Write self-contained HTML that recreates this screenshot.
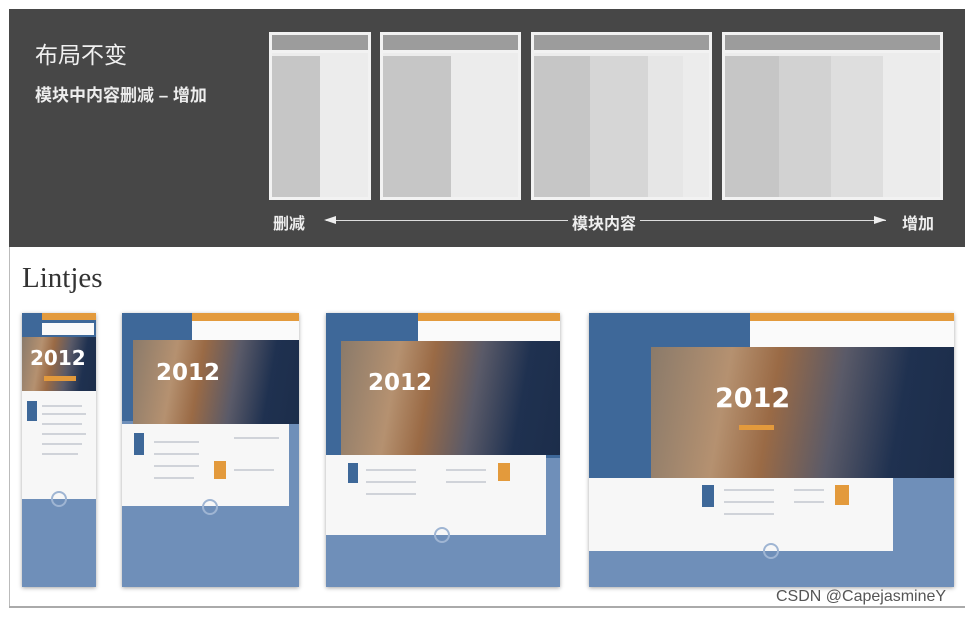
<!DOCTYPE html>
<html><head><meta charset="utf-8"><style>
*{margin:0;padding:0;box-sizing:border-box}
body{width:972px;height:618px;background:#fff;position:relative;overflow:hidden;font-family:"Liberation Sans","Noto Sans CJK SC",sans-serif}
.a{position:absolute}
.dark{left:9px;top:9px;width:956px;height:238px;background:#474747}
.wf{position:absolute;border:3px solid #f2f2f2;background:#ececec}
.wf .h{position:absolute;left:0;right:0;top:0;height:18px;background:#9c9c9c;border-bottom:3px solid #f2f2f2}
.wf .c{position:absolute;top:21px;bottom:0}
.mock{position:absolute;background:#6f8fb9;box-shadow:0 1px 4px rgba(0,0,0,.35);overflow:hidden}
.hero{position:absolute;background:linear-gradient(100deg,#8a7a6a 0%,#b59170 25%,#9a6a45 40%,#5a5a68 60%,#1f3150 80%,#1c2d4a 100%)}
.yr{position:absolute;color:#fff;font-weight:bold;font-family:"DejaVu Sans",sans-serif}
.wh{position:absolute;background:#f7f7f7}
.or{position:absolute;background:#e39a3c}
.nav{position:absolute;background:#fafafa}
.top{position:absolute;background:#3e6899}
.ln{position:absolute;height:2px;background:#d0d3d9}
.ci{position:absolute;border:2px solid #9fb5d3;border-radius:50%}
</style></head><body>
<div class="a dark"></div>
<div class="a" style="left:35px;top:36px;color:#f0f0f0;font-size:23px">布局不变</div>
<div class="a" style="left:35px;top:81px;color:#ededed;font-size:17px;font-weight:bold">模块中内容删减 – 增加</div>

<div class="wf" style="left:269px;top:32px;width:102px;height:168px"><div class="h"></div><div class="c" style="left:0;width:48px;background:#c6c6c6"></div></div>
<div class="wf" style="left:380px;top:32px;width:141px;height:168px"><div class="h"></div><div class="c" style="left:0;width:68px;background:#c6c6c6"></div></div>
<div class="wf" style="left:531px;top:32px;width:181px;height:168px"><div class="h"></div><div class="c" style="left:0;width:56px;background:#c6c6c6"></div><div class="c" style="left:56px;width:58px;background:#d6d6d6"></div><div class="c" style="left:114px;width:35px;background:#e6e6e6"></div></div>
<div class="wf" style="left:722px;top:32px;width:221px;height:168px"><div class="h"></div><div class="c" style="left:0;width:54px;background:#c6c6c6"></div><div class="c" style="left:54px;width:52px;background:#d2d2d2"></div><div class="c" style="left:106px;width:52px;background:#dedede"></div></div>

<div class="a" style="left:273px;top:210px;color:#eee;font-size:16px;font-weight:bold">删减</div>
<div class="a" style="left:326px;top:220px;width:560px;height:1px;background:#ddd"></div>
<div class="a" style="left:324px;top:216px;width:0;height:0;border-top:4px solid transparent;border-bottom:4px solid transparent;border-right:12px solid #eee"></div>
<div class="a" style="left:874px;top:216px;width:0;height:0;border-top:4px solid transparent;border-bottom:4px solid transparent;border-left:12px solid #eee"></div>
<div class="a" style="left:568px;top:210px;color:#eee;font-size:16px;font-weight:bold;background:#474747;padding:0 4px">模块内容</div>
<div class="a" style="left:902px;top:210px;color:#eee;font-size:16px;font-weight:bold">增加</div>

<div class="a" style="left:9px;top:247px;width:1px;height:360px;background:#bbb"></div>
<div class="a" style="left:9px;top:606px;width:956px;height:2px;background:#aaa"></div>
<div class="a" style="left:22px;top:262px;font-family:'Liberation Serif',serif;font-size:29px;color:#333">Lintjes</div>

<!-- mock 1 -->
<div class="mock" style="left:22px;top:313px;width:74px;height:274px">
 <div class="top" style="left:0;top:0;width:74px;height:24px"></div>
 <div class="or" style="left:20px;top:0;width:54px;height:7px"></div>
 <div class="nav" style="left:20px;top:10px;width:52px;height:12px"></div>
 <div class="hero" style="left:0;top:24px;width:74px;height:54px"></div>
 <div class="yr" style="left:8px;top:33px;font-size:20px">2012</div>
 <div class="or" style="left:22px;top:63px;width:32px;height:5px"></div>
 <div class="wh" style="left:0;top:78px;width:74px;height:108px"></div>
 <div class="top" style="left:5px;top:88px;width:10px;height:20px"></div>
 <div class="ln" style="left:20px;top:92px;width:40px"></div>
 <div class="ln" style="left:20px;top:100px;width:44px"></div>
 <div class="ln" style="left:20px;top:110px;width:40px"></div>
 <div class="ln" style="left:20px;top:120px;width:44px"></div>
 <div class="ln" style="left:20px;top:130px;width:40px"></div>
 <div class="ln" style="left:20px;top:140px;width:36px"></div>
 <div class="ci" style="left:29px;top:178px;width:16px;height:16px"></div>
</div>
<!-- mock 2 -->
<div class="mock" style="left:122px;top:313px;width:177px;height:274px">
 <div class="top" style="left:0;top:0;width:177px;height:108px"></div>
 <div class="or" style="left:70px;top:0;width:107px;height:8px"></div>
 <div class="nav" style="left:70px;top:8px;width:107px;height:19px"></div>
 <div class="hero" style="left:11px;top:27px;width:166px;height:84px"></div>
 <div class="yr" style="left:34px;top:47px;font-size:23px">2012</div>
 <div class="wh" style="left:0;top:111px;width:167px;height:82px"></div>
 <div class="top" style="left:12px;top:120px;width:10px;height:22px"></div>
 <div class="or" style="left:92px;top:148px;width:12px;height:18px"></div>
 <div class="ln" style="left:32px;top:128px;width:45px"></div>
 <div class="ln" style="left:32px;top:140px;width:45px"></div>
 <div class="ln" style="left:32px;top:152px;width:45px"></div>
 <div class="ln" style="left:32px;top:164px;width:40px"></div>
 <div class="ln" style="left:112px;top:124px;width:45px"></div>
 <div class="ln" style="left:112px;top:156px;width:40px"></div>
 <div class="ci" style="left:80px;top:186px;width:16px;height:16px"></div>
</div>
<!-- mock 3 -->
<div class="mock" style="left:326px;top:313px;width:234px;height:274px">
 <div class="top" style="left:0;top:0;width:234px;height:145px"></div>
 <div class="or" style="left:92px;top:0;width:142px;height:8px"></div>
 <div class="nav" style="left:92px;top:8px;width:142px;height:20px"></div>
 <div class="hero" style="left:15px;top:28px;width:219px;height:114px"></div>
 <div class="yr" style="left:42px;top:57px;font-size:23px">2012</div>
 <div class="wh" style="left:0;top:142px;width:220px;height:80px"></div>
 <div class="top" style="left:22px;top:150px;width:10px;height:20px"></div>
 <div class="or" style="left:172px;top:150px;width:12px;height:18px"></div>
 <div class="ln" style="left:40px;top:156px;width:50px"></div>
 <div class="ln" style="left:40px;top:168px;width:50px"></div>
 <div class="ln" style="left:40px;top:180px;width:50px"></div>
 <div class="ln" style="left:120px;top:156px;width:40px"></div>
 <div class="ln" style="left:120px;top:168px;width:40px"></div>
 <div class="ci" style="left:108px;top:214px;width:16px;height:16px"></div>
</div>
<!-- mock 4 -->
<div class="mock" style="left:589px;top:313px;width:365px;height:274px">
 <div class="top" style="left:0;top:0;width:365px;height:165px"></div>
 <div class="or" style="left:161px;top:0;width:204px;height:8px"></div>
 <div class="nav" style="left:161px;top:8px;width:204px;height:26px"></div>
 <div class="hero" style="left:62px;top:34px;width:303px;height:131px"></div>
 <div class="yr" style="left:126px;top:70px;font-size:27px">2012</div>
 <div class="or" style="left:150px;top:112px;width:35px;height:5px"></div>
 <div class="wh" style="left:0;top:165px;width:304px;height:73px"></div>
 <div class="top" style="left:113px;top:172px;width:12px;height:22px"></div>
 <div class="or" style="left:246px;top:172px;width:14px;height:20px"></div>
 <div class="ln" style="left:135px;top:176px;width:50px"></div>
 <div class="ln" style="left:135px;top:188px;width:50px"></div>
 <div class="ln" style="left:135px;top:200px;width:50px"></div>
 <div class="ln" style="left:205px;top:176px;width:30px"></div>
 <div class="ln" style="left:205px;top:188px;width:30px"></div>
 <div class="ci" style="left:174px;top:230px;width:16px;height:16px"></div>
</div>

<div class="a" style="left:776px;top:588px;font-size:16px;color:#555">CSDN @CapejasmineY</div>
</body></html>
